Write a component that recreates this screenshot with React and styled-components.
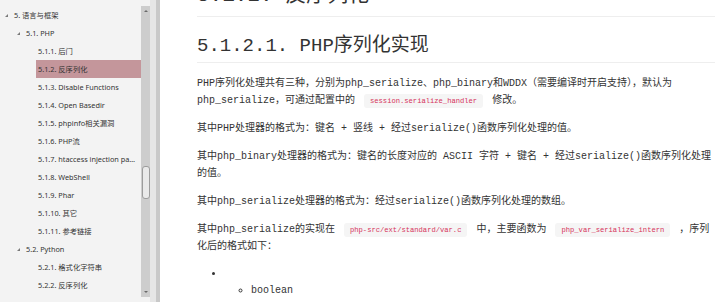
import React from 'react';
import styled, { createGlobalStyle } from 'styled-components';

const GlobalStyle = createGlobalStyle`
  html, body { margin: 0; padding: 0; width: 720px; height: 302px; overflow: hidden; background: #fff; }
  #root { height: 302px; }
`;

const Page = styled.div`
  display: flex;
  width: 720px;
  height: 302px;
  overflow: hidden;
`;

const SidePanel = styled.aside`
  display: flex;
  width: 150px;
  flex-shrink: 0;
  background: #f3f3f3;
`;

const Toc = styled.ul`
  list-style: none;
  margin: 0;
  padding: 6px 0 0;
  width: 141px;
  flex-shrink: 0;
  font-family: "Noto Sans", "Noto Sans CJK SC", sans-serif;
  font-size: 7.3px;
  color: #333;
`;

const TocRow = styled.li`
  display: flex;
  align-items: center;
  height: 18px;
  padding-left: ${(p) => 2 + p.$level * 12}px;
`;

const Toggle = styled.span`
  width: 10px;
  height: 18px;
  flex-shrink: 0;
  display: flex;
  justify-content: center;
  align-items: center;
  &::before {
    content: "";
    display: ${(p) => (p.$expanded ? 'block' : 'none')};
    width: 0;
    height: 0;
    border-left: 3px solid transparent;
    border-bottom: 3px solid #7a7a7a;
    transform: translate(-1px, 0);
  }
`;

const Label = styled.span`
  flex: 1;
  min-width: 0;
  height: 18px;
  line-height: 18px;
  padding: 0 3px 0 2px;
  white-space: nowrap;
  overflow: hidden;
  text-overflow: ellipsis;
  background: ${(p) => (p.$active ? '#c4969b' : 'transparent')};
`;

const ScrollTrack = styled.div`
  width: 9px;
  margin: 6px 0 5px;
  background: #cdcdcd;
  display: flex;
  flex-direction: column;
  align-items: center;
`;

const Arrow = styled.span`
  height: 10px;
  flex-shrink: 0;
  display: flex;
  align-items: center;
  justify-content: center;
  &::before {
    content: "";
    width: 0;
    height: 0;
    border-left: 2px solid transparent;
    border-right: 2px solid transparent;
    ${(p) => (p.$dir === 'up' ? 'border-bottom: 2px solid #6a6a6a;' : 'border-top: 2px solid #6a6a6a;')}
  }
`;

const Spacer = styled.span`
  flex: 1;
`;

const Thumb = styled.span`
  box-sizing: border-box;
  width: 8px;
  height: 33px;
  flex-shrink: 0;
  margin-top: ${(p) => p.$offset}px;
  border: 1px solid #9c9c9c;
  border-radius: 3px;
  background: #e9e9e9;
`;

const Splitter = styled.div`
  width: 10px;
  flex-shrink: 0;
  background: linear-gradient(to right, #e6e6e6 0 6px, #c9c9c9 6px 10px);
`;

const Content = styled.main`
  flex: 1;
  min-width: 0;
  padding: 0 5px 0 37px;
  overflow: hidden;
  background: #fff;
  color: #333;
  font-family: "Liberation Mono", "Noto Sans CJK SC", monospace;
`;

const H3 = styled.h3`
  margin: -16px 0 0;
  padding-bottom: 8px;
  border-bottom: 1px solid #eeeeee;
  font-size: 21px;
  line-height: 24px;
  font-weight: normal;
`;

const H4 = styled.h4`
  margin: 17px 0 0;
  padding-bottom: 4px;
  border-bottom: 1px solid #eeeeee;
  font-size: 19px;
  line-height: 24px;
  font-weight: normal;
`;

const P = styled.p`
  margin: 11px 0 0;
  font-size: 10px;
  line-height: 17px;
  &:first-of-type { margin-top: 12px; }
`;

const Code = styled.code`
  font-family: "Liberation Mono", monospace;
  font-size: 7.15px;
  line-height: 8px;
  color: #d6335b;
  background: #f5f5f5;
  padding: 3px 6px;
  border-radius: 3px;
  margin: 0 3px;
`;

const List = styled.ul`
  margin: 10px 0 0;
  padding-left: 27px;
  font-size: 10px;
  line-height: 17px;
  list-style: disc;
`;

const SubList = styled.ul`
  margin: 0;
  padding-left: 27px;
  list-style: circle;
`;

const toc = [
  { level: 0, text: '5. 语言与框架', expanded: true },
  { level: 1, text: '5.1. PHP', expanded: true },
  { level: 2, text: '5.1.1. 后门' },
  { level: 2, text: '5.1.2. 反序列化', active: true },
  { level: 2, text: '5.1.3. Disable Functions' },
  { level: 2, text: '5.1.4. Open Basedir' },
  { level: 2, text: '5.1.5. phpinfo相关漏洞' },
  { level: 2, text: '5.1.6. PHP流' },
  { level: 2, text: '5.1.7. htaccess injection payload' },
  { level: 2, text: '5.1.8. WebShell' },
  { level: 2, text: '5.1.9. Phar' },
  { level: 2, text: '5.1.10. 其它' },
  { level: 2, text: '5.1.11. 参考链接' },
  { level: 1, text: '5.2. Python', expanded: true },
  { level: 2, text: '5.2.1. 格式化字符串' },
  { level: 2, text: '5.2.2. 反序列化' },
];

export default function App() {
  return (
    <>
      <GlobalStyle />
      <Page>
        <SidePanel>
          <Toc>
            {toc.map((item) => (
              <TocRow key={item.text} $level={item.level}>
                <Toggle $expanded={item.expanded} />
                <Label $active={item.active}>{item.text}</Label>
              </TocRow>
            ))}
          </Toc>
          <ScrollTrack>
            <Arrow $dir="up" />
            <Thumb $offset={150} />
            <Spacer />
            <Arrow $dir="down" />
          </ScrollTrack>
        </SidePanel>
        <Splitter />
        <Content>
          <H3>5.1.2. 反序列化</H3>
          <H4>5.1.2.1. PHP序列化实现</H4>
          <P>
            PHP序列化处理共有三种，分别为php_serialize、php_binary和WDDX（需要编译时开启支持），默认为php_serialize，可通过配置中的 <Code>session.serialize_handler</Code> 修改。
          </P>
          <P>其中PHP处理器的格式为：键名 + 竖线 + 经过serialize()函数序列化处理的值。</P>
          <P>其中php_binary处理器的格式为：键名的长度对应的 ASCII 字符 + 键名 + 经过serialize()函数序列化处理的值。</P>
          <P>其中php_serialize处理器的格式为：经过serialize()函数序列化处理的数组。</P>
          <P>
            其中php_serialize的实现在 <Code>php-src/ext/standard/var.c</Code> 中，主要函数为 <Code>php_var_serialize_intern</Code> ，序列化后的格式如下：
          </P>
          <List>
            <li>
              {'\u00a0'}
              <SubList>
                <li>boolean</li>
              </SubList>
            </li>
          </List>
        </Content>
      </Page>
    </>
  );
}
